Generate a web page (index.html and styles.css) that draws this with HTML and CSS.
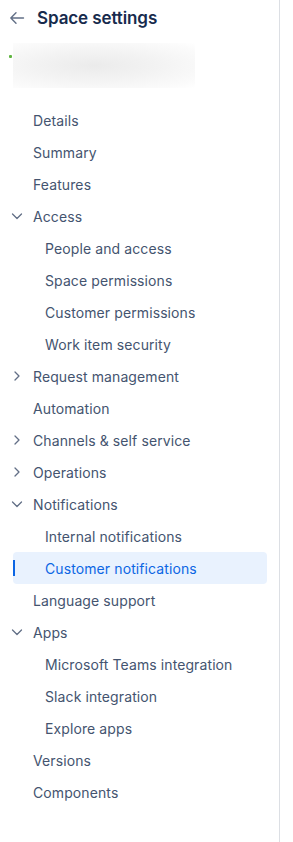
FILE: index.html
```html
<!DOCTYPE html>
<html>
<head>
<meta charset="utf-8">
<link rel="stylesheet" href="styles.css">
</head>
<body>
<aside class="sidebar">
  <header class="head">
    <svg class="back" width="16" height="16" viewBox="0 0 16 16"><path d="M14.5 8H1.8M7 2.8L1.8 8 7 13.2" fill="none" stroke="#626f86" stroke-width="1.4" stroke-linecap="round" stroke-linejoin="round"/></svg>
    <h1 class="title">Space settings</h1>
  </header>
  <div class="space">
    <span class="mark"></span>
    <div class="blur"></div>
  </div>
  <nav class="nav">
    <a class="row">Details</a>
    <a class="row">Summary</a>
    <a class="row">Features</a>
    <a class="row"><svg class="chev" viewBox="0 0 16 16"><path d="M3.5 6L8 10.5 12.5 6"/></svg>Access</a>
    <a class="row sub">People and access</a>
    <a class="row sub">Space permissions</a>
    <a class="row sub">Customer permissions</a>
    <a class="row sub">Work item security</a>
    <a class="row"><svg class="chev" viewBox="0 0 16 16"><path d="M6 4L10 8 6 12"/></svg>Request management</a>
    <a class="row">Automation</a>
    <a class="row"><svg class="chev" viewBox="0 0 16 16"><path d="M6 4L10 8 6 12"/></svg>Channels &amp; self service</a>
    <a class="row"><svg class="chev" viewBox="0 0 16 16"><path d="M6 4L10 8 6 12"/></svg>Operations</a>
    <a class="row"><svg class="chev" viewBox="0 0 16 16"><path d="M3.5 6L8 10.5 12.5 6"/></svg>Notifications</a>
    <a class="row sub">Internal notifications</a>
    <a class="row sub selected">Customer notifications</a>
    <a class="row">Language support</a>
    <a class="row"><svg class="chev" viewBox="0 0 16 16"><path d="M3.5 6L8 10.5 12.5 6"/></svg>Apps</a>
    <a class="row sub">Microsoft Teams integration</a>
    <a class="row sub">Slack integration</a>
    <a class="row sub">Explore apps</a>
    <a class="row">Versions</a>
    <a class="row">Components</a>
  </nav>
</aside>
</body>
</html>
```
FILE: styles.css
```css
html, body {
  margin: 0;
  padding: 0;
  background: #fff;
}
body {
  font-family: Inter, "Noto Sans", sans-serif;
  color: #44546f;
  width: 293px;
  height: 842px;
  overflow: hidden;
}
.sidebar {
  width: 279px;
  height: 842px;
  border-right: 1px solid #dcdfe4;
}
.head {
  display: flex;
  align-items: center;
  height: 35px;
  padding-left: 9px;
}
.back {
  width: 16px;
  height: 16px;
  margin-right: 12px;
}
.title {
  margin: 0;
  font-size: 17px;
  font-weight: 600;
  color: #172b4d;
  letter-spacing: -0.1px;
}
.space {
  display: flex;
  align-items: flex-start;
  height: 69px;
  padding-top: 8px;
  box-sizing: border-box;
  padding-left: 9px;
}
.mark {
  width: 3px;
  height: 3px;
  background: #5fb540;
  margin-top: 12px;
  border-radius: 1px;
}
.blur {
  width: 182px;
  height: 45px;
  margin-left: 1px;
  background: radial-gradient(ellipse at 45% 50%, #ebebeb 0%, #f3f3f3 45%, #fbfbfb 85%, #fff 100%);
}
.nav {
  display: flex;
  flex-direction: column;
  margin-left: 13px;
  width: 254px;
}
.row {
  position: relative;
  display: flex;
  align-items: center;
  height: 32px;
  padding-left: 20px;
  font-size: 14px;
  letter-spacing: 0.1px;
  color: #44546f;
  border-radius: 4px;
}
.row.sub {
  padding-left: 32px;
}
.chev {
  position: absolute;
  left: -4px;
  top: 8px;
  width: 16px;
  height: 16px;
  fill: none;
  stroke: #626f86;
  stroke-width: 1.3;
  stroke-linecap: round;
  stroke-linejoin: round;
}
.row.selected {
  background: #e9f2fe;
  color: #0c66e4;
}
.row.selected::before {
  content: "";
  position: absolute;
  left: 0;
  top: 8px;
  width: 2px;
  height: 16px;
  background: #0c66e4;
}
```
